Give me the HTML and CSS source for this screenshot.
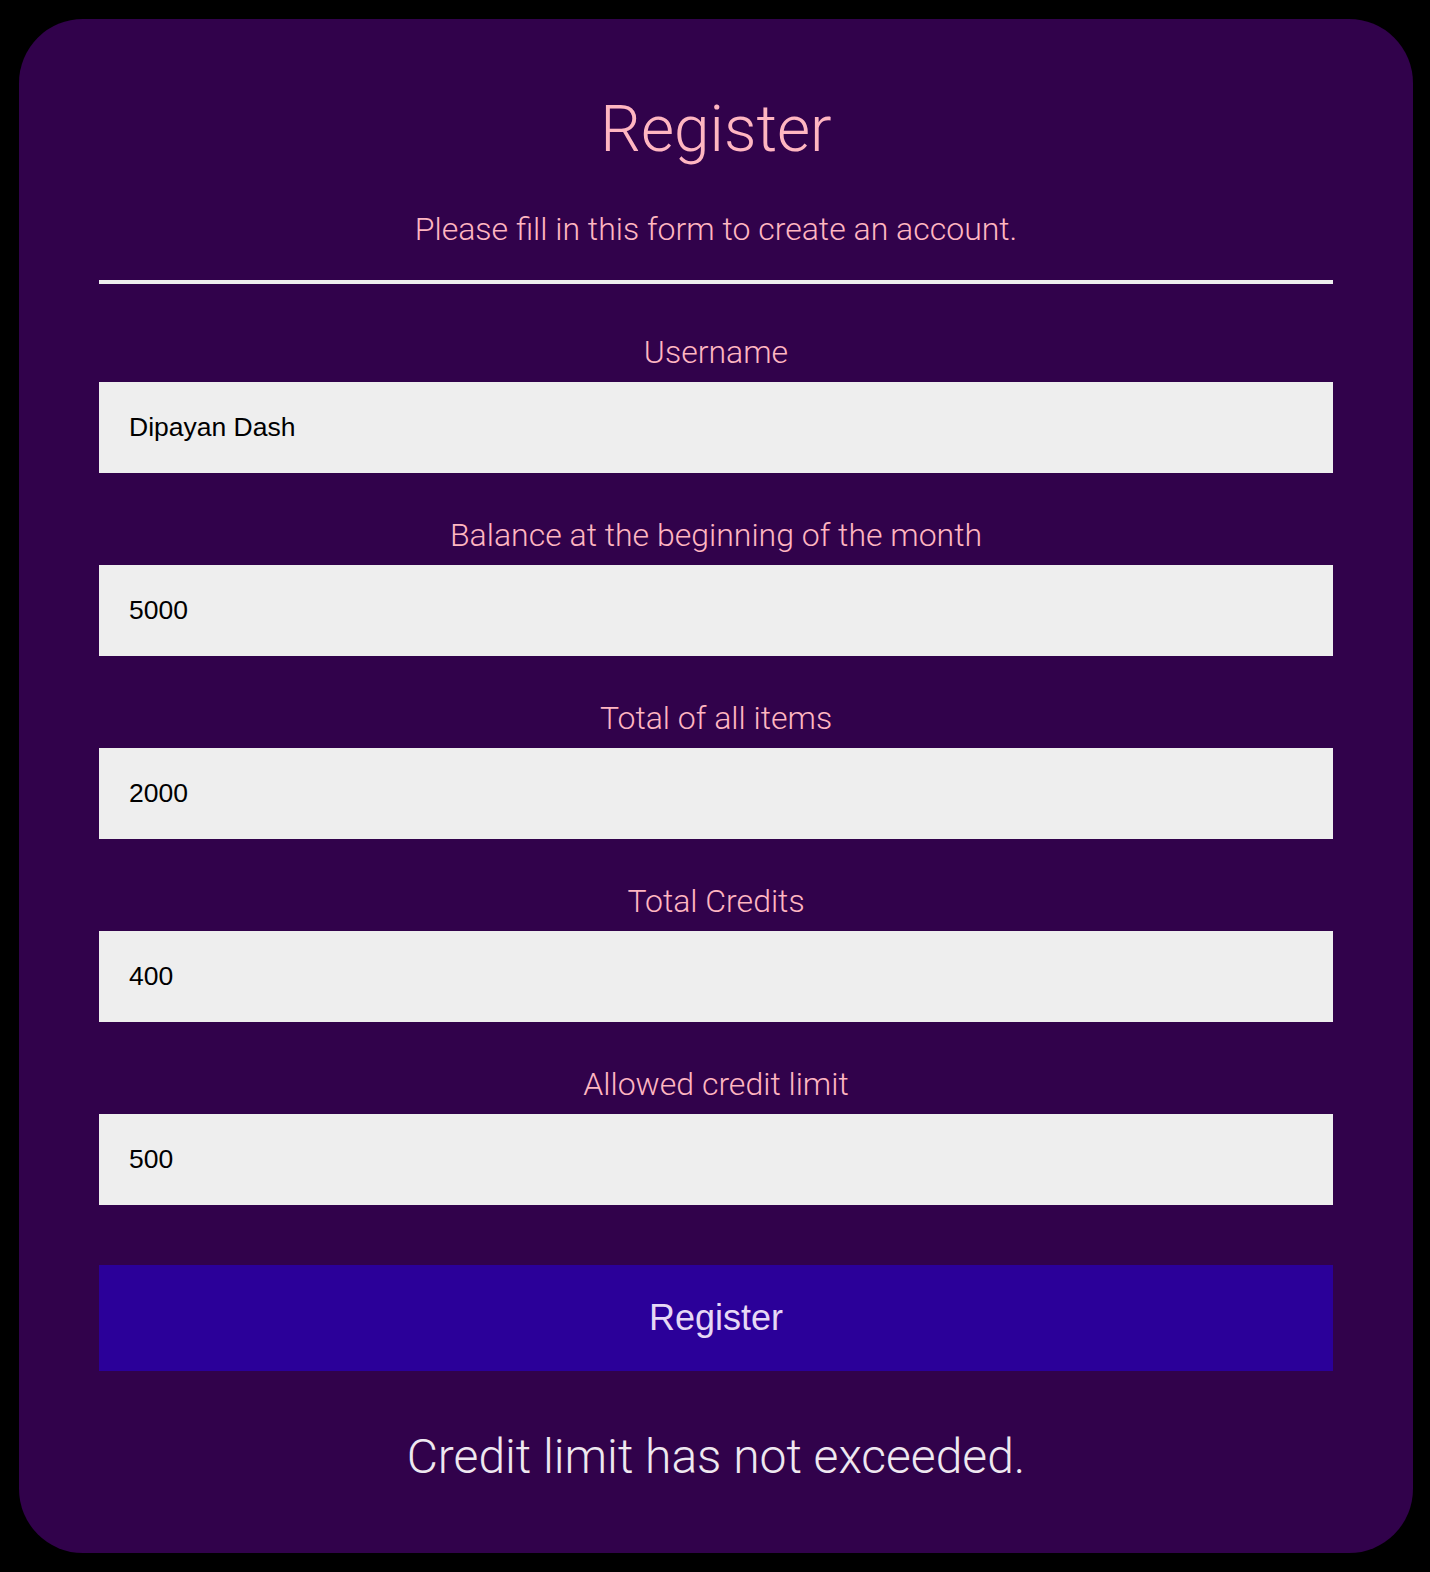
FILE: index.html
```html
<!DOCTYPE html>
<html>
<head>
<meta charset="utf-8">
<link rel="stylesheet" href="styles.css">
</head>
<body>
<div class="card">
  <h1 class="title">Register</h1>
  <p class="subtitle">Please fill in this form to create an account.</p>
  <hr class="divider">
  <form class="form">
    <label class="label">Username</label>
    <input class="field" type="text" value="Dipayan Dash">
    <label class="label">Balance at the beginning of the month</label>
    <input class="field" type="text" value="5000">
    <label class="label">Total of all items</label>
    <input class="field" type="text" value="2000">
    <label class="label">Total Credits</label>
    <input class="field" type="text" value="400">
    <label class="label">Allowed credit limit</label>
    <input class="field" type="text" value="500">
    <button class="btn" type="button">Register</button>
  </form>
  <p class="result">Credit limit has not exceeded.</p>
</div>
</body>
</html>
```
FILE: styles.css
```css
html, body {
  margin: 0;
  padding: 0;
  background: #000;
}
body {
  padding: 19px 17px 19px 19px;
  font-family: Roboto, "Liberation Sans", sans-serif;
}
.card {
  box-sizing: border-box;
  width: 1394px;
  height: 1534px;
  background: #31024b;
  border-radius: 64px;
  padding: 0 80px;
  overflow: hidden;
  text-align: center;
}
.title {
  margin: 0;
  padding-top: 71px;
  font-size: 64px;
  line-height: 80px;
  font-weight: 300;
  color: #ffb6c1;
}
.subtitle {
  margin: 41px 0 0;
  font-size: 32px;
  line-height: 36px;
  font-weight: 300;
  color: #ffb6c1;
}
.divider {
  margin: 33px 0 0;
  border: 0;
  height: 4px;
  background: #eeeeee;
}
.form {
  display: flex;
  flex-direction: column;
}
.label {
  display: block;
  margin-top: 44px;
  font-size: 32px;
  line-height: 36px;
  font-weight: 300;
  color: #ffb6c1;
}
.divider + .form .label:first-child {
  margin-top: 50px;
}
.field {
  box-sizing: border-box;
  margin-top: 12px;
  height: 91px;
  width: 100%;
  border: 0;
  outline: none;
  background: #eeeeee;
  padding: 0 30px;
  font-family: "Liberation Sans", Arial, sans-serif;
  font-size: 26.5px;
  color: #000;
}
.btn {
  margin-top: 60px;
  height: 106px;
  width: 100%;
  border: 0;
  background: #2b0099;
  color: #e6d8f5;
  font-family: "Liberation Sans", Arial, sans-serif;
  font-size: 36px;
  cursor: pointer;
}
.result {
  margin: 57px 0 0;
  font-size: 48px;
  line-height: 58px;
  font-weight: 300;
  color: #eee8f0;
}
```
